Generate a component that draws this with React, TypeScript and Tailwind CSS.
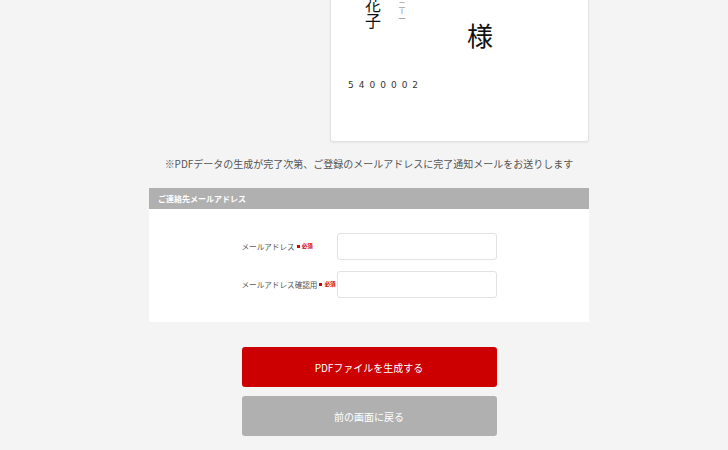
const jp = { fontFamily: '"Noto Sans CJK JP", "Noto Sans", sans-serif' };

const fields = [
  { label: "メールアドレス", name: "email" },
  { label: "メールアドレス確認用", name: "email_confirm" },
];

const Postcard = () => (
  <div className="flex justify-end">
    <div className="relative -mt-[20px] h-[162px] w-[259px] rounded-b-[3px] border border-[#e2e2e2] bg-white shadow-[0_1px_2px_rgba(0,0,0,0.06)]">
      {/* name, vertical */}
      <div
        className="absolute left-[32px] top-[16px] text-[16px] leading-[20px] text-[#111] [writing-mode:vertical-rl]"
        style={jp}
      >
        花子
      </div>
      {/* address number, vertical */}
      <div
        className="absolute left-[67px] top-[20px] text-[7px] leading-[8px] text-[#777] [writing-mode:vertical-rl]"
        style={jp}
      >
        二ー一
      </div>
      <div className="absolute left-[136px] top-[39px] text-[26px] leading-[30px] text-[#111]" style={jp}>
        様
      </div>
      <div
        className="absolute left-[17px] top-[98px] text-[9px] tracking-[5px] text-[#333]"
        style={{ fontFamily: '"DejaVu Sans", sans-serif' }}
      >
        5400002
      </div>
    </div>
  </div>
);

export default function App() {
  return (
    <div className="min-h-[450px] overflow-hidden bg-[#f4f4f4]" style={jp}>
      <div className="mx-auto w-[450px] pl-[10px]">
        <Postcard />

        <p className="mt-[14px] whitespace-nowrap text-center text-[10px] leading-[16px] text-[#555]">
          ※PDFデータの生成が完了次第、ご登録のメールアドレスに完了通知メールをお送りします
        </p>

        <div className="mt-[16px]">
          <div className="flex h-[21px] items-center bg-[#b0b0b0] px-[9px] text-[8px] font-bold text-white">
            ご連絡先メールアドレス
          </div>
          <div className="flex flex-col items-center gap-[11px] bg-white pb-[24px] pt-[24px]">
            {fields.map((f) => (
              <div key={f.name} className="flex w-[255px] items-center">
                <label className="flex w-[95px] shrink-0 items-center whitespace-nowrap text-[7.6px] text-[#555]">
                  {f.label}
                  <span className="mx-[2px] inline-block h-[3px] w-[3px] bg-[#d40000]" />
                  <span className="text-[5.6px] font-bold text-[#d40000]">必須</span>
                </label>
                <input
                  name={f.name}
                  className="h-[27px] w-[160px] rounded-[3px] border border-[#e2e2e2] bg-white px-2 text-[12px] outline-none"
                />
              </div>
            ))}
          </div>
        </div>

        <div className="mt-[25px] flex flex-col items-center gap-[9px]">
          <button className="h-[40px] w-[255px] rounded-[3px] bg-[#cc0000] text-[10px] text-white">
            PDFファイルを生成する
          </button>
          <button className="h-[40px] w-[255px] rounded-[3px] bg-[#b0b0b0] text-[10px] text-white">
            前の画面に戻る
          </button>
        </div>
      </div>
    </div>
  );
}
